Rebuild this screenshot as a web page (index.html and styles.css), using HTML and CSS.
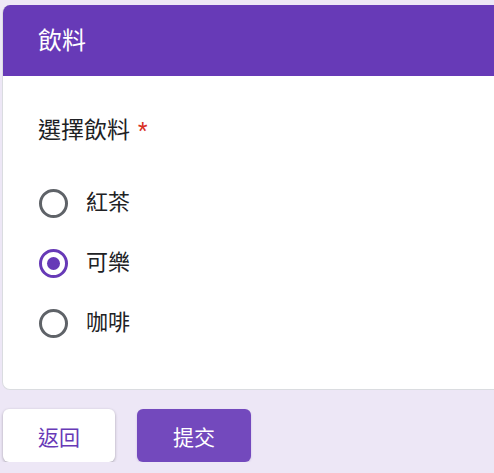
FILE: index.html
```html
<!DOCTYPE html>
<html lang="zh-Hant">
<head>
<meta charset="utf-8">
<title>飲料</title>
<link rel="stylesheet" href="styles.css">
</head>
<body>
<div class="page">
  <section class="card">
    <header class="card-header">飲料</header>
    <div class="card-body">
      <div class="question">選擇飲料<span class="req">*</span></div>
      <div class="options">
        <label class="option"><span class="radio"></span><span class="opt-text">紅茶</span></label>
        <label class="option"><span class="radio checked"></span><span class="opt-text">可樂</span></label>
        <label class="option"><span class="radio"></span><span class="opt-text">咖啡</span></label>
      </div>
    </div>
  </section>
  <div class="actions">
    <button class="btn btn-back">返回</button>
    <button class="btn btn-submit">提交</button>
  </div>
</div>
</body>
</html>
```

FILE: styles.css
```css
html, body {
  margin: 0;
  padding: 0;
  overflow: hidden;
  background: #ede7f6;
}
body {
  font-family: Roboto, "Noto Sans CJK TC", "Noto Sans", sans-serif;
  color: #202124;
}
.page {
  padding: 5px 0 0 2px;
  width: 560px;
}
.card {
  background: #fff;
  border: 1px solid #dadce0;
  border-top: none;
  border-radius: 8px;
  overflow: hidden;
}
.card-header {
  background: #673ab7;
  color: #fff;
  height: 71px;
  display: flex;
  align-items: center;
  padding-left: 35px;
  font-size: 24px;
  line-height: 1;
}
.card-body {
  padding: 39px 35px 36px 35px;
}
.question {
  font-size: 23px;
  line-height: 32px;
  height: 32px;
}
.req {
  color: #d93025;
  font-size: 22px;
  margin-left: 8px;
}
.options {
  margin-top: 26px;
  display: flex;
  flex-direction: column;
}
.option {
  display: flex;
  align-items: center;
  height: 60px;
}
.radio {
  box-sizing: border-box;
  width: 29px;
  height: 29px;
  margin-left: 1px;
  border: 3px solid #5f6368;
  border-radius: 50%;
  display: flex;
  align-items: center;
  justify-content: center;
}
.radio.checked {
  border-color: #673ab7;
}
.radio.checked::after {
  content: "";
  width: 13px;
  height: 13px;
  border-radius: 50%;
  background: #673ab7;
}
.opt-text {
  margin-left: 18px;
  font-size: 22px;
  line-height: 32px;
}
.actions {
  display: flex;
  gap: 22px;
  margin-top: 19px;
  padding-left: 1px;
}
.btn {
  height: 53px;
  border: none;
  border-radius: 6px;
  font-family: Roboto, "Noto Sans CJK TC", sans-serif;
  font-size: 21px;
  padding: 0;
}
.btn-back {
  width: 112px;
  background: #fff;
  color: #673ab7;
  box-shadow: 0 1px 3px rgba(0,0,0,0.3);
}
.btn-submit {
  width: 114px;
  background: #7349bd;
  color: #fff;
  box-shadow: 0 1px 2px rgba(103,58,183,0.25);
}
```
